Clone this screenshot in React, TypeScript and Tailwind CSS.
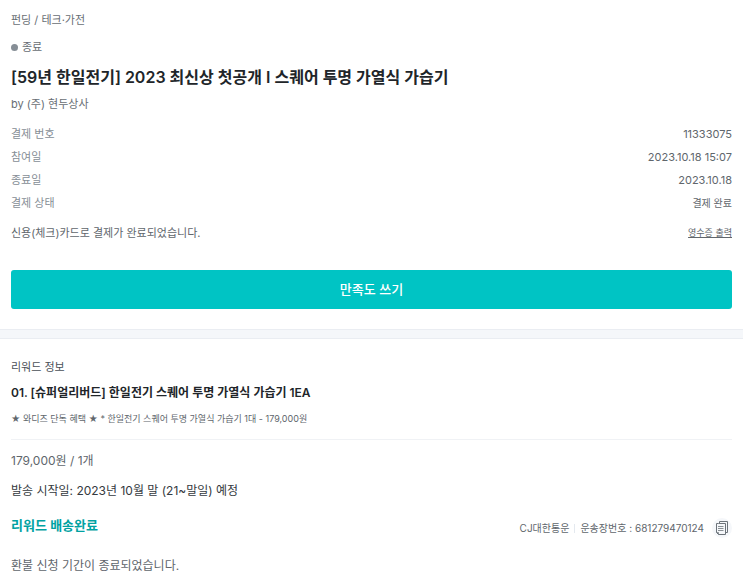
import { useState } from 'react';

interface PaymentRow {
    label: string;
    value: string;
    small?: boolean;
}

const paymentRows: PaymentRow[] = [
    { label: '결제 번호', value: '11333075' },
    { label: '참여일', value: '2023.10.18 15:07' },
    { label: '종료일', value: '2023.10.18' },
    { label: '결제 상태', value: '결제 완료', small: true }
];

const invoiceNumber = '681279470124';

function CopyIcon() {
    return (
        <svg width="14" height="14" viewBox="0 0 14 14" fill="none" stroke="#6c737a" aria-hidden="true">
            <path d="M4.5 2.5v-2h8v11h-2" />
            <path d="M3.5 2.5h7v11h-7l-2-2v-9z" />
            <path d="M1.5 11.5h2v2M3 5.5h5.5M3 7.5h5.5M3 9.5h5.5" strokeWidth="0.8" />
        </svg>
    );
}

function PaymentSection() {
    return (
        <section className="px-[11px] pt-[10px] pb-5">
            <p className="text-[11px] leading-5 text-[#686e74]">펀딩 / 테크·가전</p>
            <p className="mt-[7px] flex items-center gap-1 text-[11px] leading-5 text-[#686e74]">
                <span className="size-[7px] rounded-full bg-[#868e96]" />
                종료
            </p>
            <h1 className="mt-[6px] text-base leading-7 font-semibold text-[#212529]">
                [59년 한일전기] 2023 최신상 첫공개 I 스퀘어 투명 가열식 가습기
            </h1>
            <p className="mt-[3px] text-[11px] leading-5 text-[#686e74]">by (주) 현두상사</p>

            <dl className="mt-[9px]">
                {paymentRows.map((row) => (
                    <div key={row.label} className="flex items-center justify-between leading-[23px]">
                        <dt className="text-[11px] text-[#868e96]">{row.label}</dt>
                        <dd className={row.small ? 'text-[10px] text-[#60666c]' : 'text-[11px] text-[#60666c]'}>
                            {row.value}
                        </dd>
                    </div>
                ))}
            </dl>

            <div className="mt-2 flex items-center justify-between leading-5 text-[#60666c]">
                <p className="text-[11px]">신용(체크)카드로 결제가 완료되었습니다.</p>
                <a href="#receipt" className="text-[9px] underline">
                    영수증 출력
                </a>
            </div>

            <button
                type="button"
                className="mt-[27px] h-[39px] w-full rounded-[3px] bg-[#00c4c4] text-[13px] font-medium text-white"
            >
                만족도 쓰기
            </button>
        </section>
    );
}

function RewardSection() {
    const [copied, setCopied] = useState(false);

    const copyInvoice = async () => {
        await navigator.clipboard.writeText(invoiceNumber);
        setCopied(true);
    };

    return (
        <section className="px-[11px] pt-[18px] pb-2">
            <h2 className="text-[11px] leading-5 text-[#495057]">리워드 정보</h2>
            <h3 className="mt-[6px] text-xs leading-5 font-semibold text-[#212529]">
                01. [슈퍼얼리버드] 한일전기 스퀘어 투명 가열식 가습기 1EA
            </h3>
            <p className="mt-[6px] text-[9px] leading-5 text-[#60666c]">
                ★ 와디즈 단독 혜택 ★ * 한일전기 스퀘어 투명 가열식 가습기 1대 - 179,000원
            </p>
            <hr className="mt-[10px] border-[#f0f2f5]" />

            <p className="mt-[11px] text-xs leading-5 text-[#60666c]">179,000원 / 1개</p>
            <p className="mt-[10px] text-xs leading-5 text-[#343a40]">발송 시작일: 2023년 10월 말 (21~말일) 예정</p>

            <div className="mt-[14px] flex items-start justify-between">
                <strong className="text-[13px] leading-5 font-semibold text-[#00a2a2]">리워드 배송완료</strong>
                <div className="flex items-center pt-[3px] text-[10px] leading-5 text-[#60666c]">
                    <span>CJ대한통운</span>
                    <span className="mx-[5px] h-[9px] w-px bg-[#e4e9ef]" />
                    <span>운송장번호 : {invoiceNumber}</span>
                    <button
                        type="button"
                        onClick={copyInvoice}
                        aria-label={copied ? '복사됨' : '운송장번호 복사'}
                        className="ml-2 flex size-5 items-center justify-center rounded-full bg-[#f5f7fa]"
                    >
                        <CopyIcon />
                    </button>
                </div>
            </div>

            <p className="mt-[18px] text-xs leading-5 text-[#60666c]">환불 신청 기간이 종료되었습니다.</p>
        </section>
    );
}

export default function App() {
    return (
        <main className="bg-white font-['Inter','Noto_Sans_CJK_KR',sans-serif]">
            <PaymentSection />
            <div className="h-[10px] border-y border-[#eaedf2] bg-[#f5f7fa]" />
            <RewardSection />
        </main>
    );
}
